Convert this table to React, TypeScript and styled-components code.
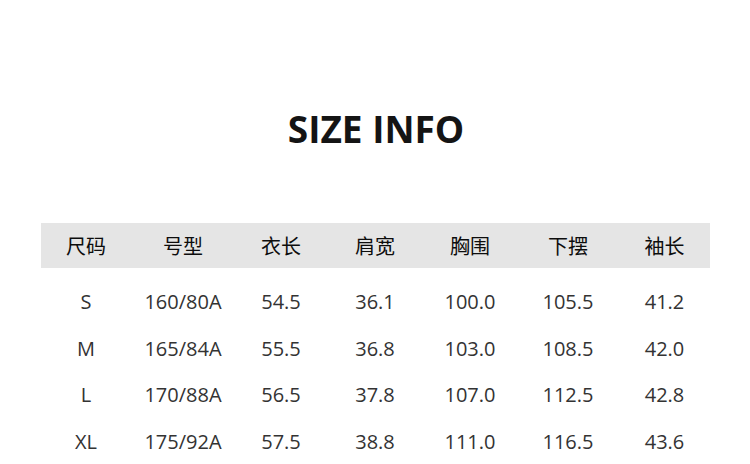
import React from "react";
import styled, { createGlobalStyle } from "styled-components";

const Global = createGlobalStyle`
  html, body { margin: 0; padding: 0; background: #ffffff; }
  body { font-family: "Open Sans", "Noto Sans CJK SC", sans-serif; }
`;

const Page = styled.div`
  width: 750px;
  height: 464px;
  box-sizing: border-box;
  padding: 106px 40px 0 41px;
  display: flex;
  flex-direction: column;
  align-items: stretch;
  overflow: hidden;
`;

const Title = styled.h1`
  margin: 0;
  text-align: center;
  font-family: "Open Sans", sans-serif;
  font-weight: 700;
  font-size: 37px;
  line-height: 46px;
  color: #141414;
  padding-left: 1px;
`;

const Table = styled.div`
  margin-top: 71px;
  display: flex;
  flex-direction: column;
`;

const columns = "90px 104px 92px 96px 94px 102px 1fr";

const HeadRow = styled.div`
  display: grid;
  grid-template-columns: ${columns};
  height: 45px;
  align-items: center;
  background: #e5e5e5;
  margin-bottom: 11px;
`;

const Row = styled.div`
  display: grid;
  grid-template-columns: ${columns};
  height: 46.5px;
  align-items: center;
`;

const HeadCell = styled.div`
  text-align: center;
  font-family: "Noto Sans CJK SC", sans-serif;
  font-size: 20px;
  line-height: 24px;
  color: #0d0d0d;
`;

const Cell = styled.div`
  text-align: center;
  font-family: "Open Sans", sans-serif;
  font-size: 20px;
  line-height: 24px;
  color: #333333;
`;

const headers = ["尺码", "号型", "衣长", "肩宽", "胸围", "下摆", "袖长"];
const rows = [
  ["S", "160/80A", "54.5", "36.1", "100.0", "105.5", "41.2"],
  ["M", "165/84A", "55.5", "36.8", "103.0", "108.5", "42.0"],
  ["L", "170/88A", "56.5", "37.8", "107.0", "112.5", "42.8"],
  ["XL", "175/92A", "57.5", "38.8", "111.0", "116.5", "43.6"],
];

export default function App() {
  return (
    <>
      <Global />
      <Page>
        <Title>SIZE INFO</Title>
        <Table>
          <HeadRow>
            {headers.map((h) => (
              <HeadCell key={h}>{h}</HeadCell>
            ))}
          </HeadRow>
          {rows.map((r) => (
            <Row key={r[0]}>
              {r.map((c, i) => (
                <Cell key={i}>{c}</Cell>
              ))}
            </Row>
          ))}
        </Table>
      </Page>
    </>
  );
}
